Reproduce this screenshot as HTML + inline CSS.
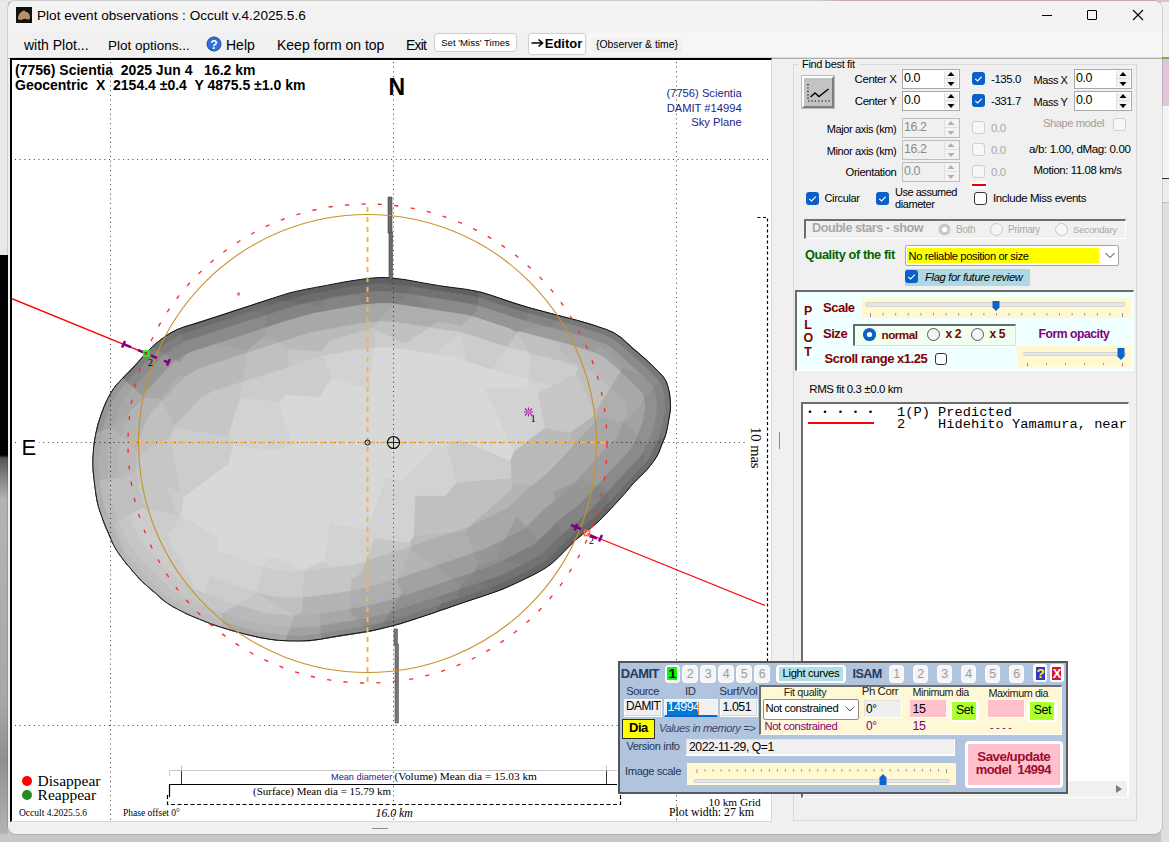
<!DOCTYPE html>
<html><head><meta charset="utf-8">
<style>
*{margin:0;padding:0;box-sizing:border-box}
html,body{width:1169px;height:842px;overflow:hidden;background:#c9c9c9;font-family:"Liberation Sans",sans-serif;color:#000}
.a{position:absolute;white-space:nowrap}
.s{font-family:"Liberation Serif",serif}
.m{font-family:"Liberation Mono",monospace}
.b{font-weight:bold}
.i{font-style:italic}
</style></head><body>
<!-- outside strips -->
<div class="a" style="left:0;top:0;width:8px;height:842px;background:linear-gradient(#e9e9e9 0,#e9e9e9 255px,#000 255px,#000 455px,#555 458px,#8a8a8a 480px,#b3b3b3 500px,#a8a8a8 700px,#8f8f8f 760px,#b8b8b8 842px)"></div>
<div class="a" style="left:0;top:834px;width:1169px;height:8px;background:#c7c7c7"></div>
<div class="a" style="left:0;top:0;width:1169px;height:2px;background:linear-gradient(90deg,#e6e6e6 0,#e6e6e6 820px,#dcc0d4 840px,#dcc0d4 1169px)"></div>
<div class="a" style="left:1161px;top:0;width:8px;height:842px;background:linear-gradient(#dcc0d4 0,#dcc0d4 2px,#f0f0f0 2px,#f0f0f0 57px,#7cb342 57px,#7cb342 59px,#e0c4d8 59px,#e0c4d8 106px,#f4f4f4 106px,#f4f4f4 178px,#333 178px,#333 179px,#ececec 179px,#ececec 202px,#bdbdbd 202px,#bdbdbd 203px,#dedede 203px,#dedede 842px)"></div>

<!-- window -->
<div class="a" id="win" style="left:8px;top:1px;width:1154px;height:833px;background:#f0f0f0;border-radius:8px;box-shadow:0 0 0 1px rgba(0,0,0,0.12);overflow:hidden">
  <div class="a" style="left:0;top:0;width:1154px;height:30px;background:#f3f3f3"></div>
  <div class="a" style="left:0;top:30px;width:1154px;height:28px;background:#f6f6f6"></div>
  <div class="a" style="left:0;top:30px;width:579px;height:24.5px;background:#f0f0f0"></div>
  <div class="a" style="left:0;top:56px;width:1154px;height:1.5px;background:linear-gradient(#f6f6f6,#9a9a9a)"></div>
</div>

<!-- title -->
<div class="a" style="left:16px;top:7px;width:16px;height:16px;background:#111"></div>
<svg class="a" style="left:16px;top:7px" width="16" height="16"><path d="M2 12 C2 8 4 5 7 4 C8 3 9 4 10 5 C12 5 14 7 14 10 C14 13 12 13 10 12 C8 11 6 13 4 13 Z" fill="#b89068"/></svg>
<div class="a" style="left:37px;top:7px;font-size:13.6px;line-height:17px;color:#000">Plot event observations : Occult v.4.2025.5.6</div>
<div class="a" style="left:1042px;top:15px;width:10px;height:1px;background:#000"></div>
<div class="a" style="left:1087px;top:10px;width:10px;height:10px;border:1px solid #000;border-radius:1px"></div>
<svg class="a" style="left:1132px;top:9px" width="12" height="12"><path d="M1 1 L11 11 M11 1 L1 11" stroke="#000" stroke-width="1.1"/></svg>

<!-- menu -->
<div class="a" style="left:24px;top:37px;font-size:14px;line-height:17px">with Plot...</div>
<div class="a" style="left:108px;top:37px;font-size:13.5px;line-height:17px">Plot options...</div>
<svg class="a" style="left:206px;top:36px" width="16" height="16"><circle cx="8" cy="8" r="7" fill="#2f6fd8" stroke="#1a4aa0" stroke-width="1"/><text x="8" y="12.5" font-family="Liberation Sans" font-weight="bold" font-size="12" fill="#fff" text-anchor="middle">?</text></svg>
<div class="a" style="left:226px;top:37px;font-size:14px;line-height:17px">Help</div>
<div class="a" style="left:277px;top:37px;font-size:14px;line-height:17px">Keep form on top</div>
<div class="a" style="left:406px;top:37px;font-size:14px;letter-spacing:-0.8px;line-height:17px">Exit</div>
<div class="a" style="left:434px;top:32.5px;width:83px;height:19.5px;background:#fff;border:1px solid #d0d0d0;border-radius:4px;font-size:9.6px;line-height:18px;text-align:center">Set 'Miss' Times</div>
<div class="a b" style="left:527.5px;top:32.5px;width:58px;height:22px;background:#fff;border:1px solid #d0d0d0;border-radius:4px;font-size:13px;line-height:20px;text-align:center"><svg width="14" height="10" style="vertical-align:0px"><path d="M0.5 5 H11 M7.5 1.5 L11.5 5 L7.5 8.5" fill="none" stroke="#000" stroke-width="1.6"/></svg>Editor</div>
<div class="a" style="left:592px;top:38.5px;width:90px;height:13px;background:#f0f0f0"></div><div class="a" style="left:596px;top:38px;font-size:10.4px;line-height:14px">{Observer &amp; time}</div>

<!-- plot area -->
<div class="a" style="left:10px;top:58px;width:762px;height:764px;background:#fff;border-top:2px solid #000;border-left:2px solid #000;border-right:1px solid #d8d8d8;border-bottom:1px solid #d8d8d8"></div>
<svg class="a" style="left:0;top:0" width="1169" height="842" viewBox="0 0 1169 842">
<defs><clipPath id="pc"><rect x="12" y="60" width="759" height="760"/></clipPath></defs>
<g clip-path="url(#pc)">
<polygon points="93.6,448.3 94.4,441.7 95.5,435.3 96.8,429.1 98.4,423.2 100.2,417.5 102.1,412.0 104.1,406.8 106.2,401.8 108.5,397.0 111.0,392.7 113.7,388.5 117.1,384.2 121.6,379.4 126.8,374.4 132.0,369.2 137.1,363.4 142.2,357.4 147.0,352.0 151.3,347.7 155.4,343.9 159.9,340.3 165.1,336.5 170.7,332.9 177.0,329.6 183.8,327.0 191.3,324.8 200.0,322.2 210.3,318.8 221.9,315.1 234.2,311.0 248.2,306.4 262.9,301.5 275.3,297.4 283.3,294.8 289.0,293.1 295.8,291.4 305.2,289.4 315.7,287.4 326.6,285.4 337.9,283.2 349.6,281.1 360.8,279.4 370.5,278.2 379.7,277.5 391.0,277.8 406.1,279.8 423.1,282.9 439.2,285.7 453.0,287.6 465.7,289.2 478.5,291.6 491.6,295.4 504.8,300.0 517.9,304.4 531.4,308.3 544.8,311.9 557.2,315.2 567.8,318.0 577.4,320.4 586.7,323.1 596.4,326.1 605.9,329.3 614.3,333.0 621.0,337.6 626.7,342.8 632.0,347.8 637.2,352.1 642.0,356.2 647.0,360.6 652.7,365.9 658.4,371.5 663.0,376.6 665.7,380.6 667.2,384.2 668.4,388.4 669.5,394.0 670.2,400.1 670.5,405.5 670.4,409.2 670.0,412.3 669.4,416.0 668.5,421.4 667.4,427.5 666.2,433.0 664.9,437.0 663.5,440.4 662.0,444.0 660.4,448.1 658.8,452.5 656.6,456.8 653.8,461.1 650.6,465.3 647.0,469.6 643.0,473.8 638.6,478.0 634.2,482.4 630.3,486.9 626.5,491.6 621.4,497.4 614.3,505.1 606.1,513.9 598.0,522.0 590.3,528.5 582.7,534.3 575.7,540.0 569.6,545.9 564.1,551.6 558.8,556.9 554.3,561.2 549.9,565.0 543.7,569.2 533.8,574.6 522.0,580.4 511.7,585.2 504.8,588.3 499.4,590.4 492.9,592.7 484.1,595.7 474.2,599.0 464.7,602.1 456.2,605.0 448.1,607.9 440.2,610.6 432.6,613.2 425.2,615.6 417.6,618.1 409.6,620.7 401.3,623.3 393.2,625.6 385.6,627.6 378.1,629.3 370.0,631.0 360.8,632.5 351.0,634.0 341.0,635.5 330.8,637.3 320.4,639.2 310.0,640.5 299.6,641.0 289.3,640.9 279.5,640.4 270.5,639.4 262.1,637.9 253.6,636.1 244.8,634.0 236.0,631.6 227.8,629.2 220.6,627.0 213.9,624.8 207.1,622.3 199.6,619.3 191.8,616.1 184.7,612.8 178.4,609.7 172.7,606.5 167.5,603.3 163.1,600.0 159.4,596.6 155.4,593.0 151.0,589.3 146.3,585.3 141.7,581.0 137.0,576.1 132.4,570.8 127.9,565.4 123.5,560.0 119.4,554.4 115.8,549.1 113.1,544.2 111.1,539.4 109.0,534.4 106.6,528.9 104.2,523.0 102.0,517.2 100.1,512.0 98.4,506.7 96.9,500.0 95.4,490.5 94.0,479.6 93.1,469.7 92.8,461.8 93.1,454.9" fill="rgb(96,96,96)"/>
<path d="M666.4 382.1 663.4 376.9 645.9 359.4 620.9 337.4 612.4 332.1 588.6 323.6 530.1 308.1 479.9 291.9 478.4 297.9 403.9 285.4 378.9 283.4 339.9 288.6 300.1 296.4 284.6 300.9 270.6 298.9 182.9 327.4 170.1 333.1 153.1 345.9 116.6 384.6 110.9 392.9 103.6 407.9 98.1 423.6 94.4 441.1 92.9 465.6 96.9 500.6 104.1 523.4 112.4 542.6 124.1 560.9 140.4 579.9 163.4 600.4 186.6 613.9 212.9 624.6 236.6 631.9 259.1 637.4 278.6 640.4 310.9 640.6 370.6 631.1 400.9 623.6 503.1 589.1 535.4 573.9 551.1 564.1 576.1 539.6 602.1 518.1 633.4 483.1 647.6 469.1 656.9 456.6 665.4 435.9 670.1 412.9 669.6 393.6Z" fill="rgb(102,102,102)" fill-rule="evenodd" stroke="rgb(102,102,102)" stroke-width="0.6"/>
<path d="M666.4 382.1 663.4 376.9 645.9 359.4 620.9 337.4 612.4 332.1 588.6 323.6 530.1 308.1 479.9 291.9 478.4 297.9 403.9 285.4 378.9 283.4 353.4 286.4 307.1 294.9 267.9 306.4 267.9 299.9 182.9 327.4 170.1 333.1 153.1 345.9 116.6 384.6 110.9 392.9 103.6 407.9 98.1 423.6 94.4 441.1 92.9 465.6 96.9 500.6 104.1 523.4 112.4 542.6 124.1 560.9 140.4 579.9 163.4 600.4 186.6 613.9 212.9 624.6 236.6 631.9 259.1 637.4 278.6 640.4 310.9 640.6 370.6 631.1 400.9 623.6 494.6 592.1 488.6 587.6 502.6 582.9 542.4 562.9 552.6 554.6 572.1 535.1 593.4 518.4 608.9 502.1 609.6 510.1 633.4 483.1 647.6 469.1 659.1 452.1 666.1 433.4 670.4 410.6 669.6 393.6Z" fill="rgb(108,108,108)" fill-rule="evenodd" stroke="rgb(108,108,108)" stroke-width="0.6"/>
<path d="M666.4 382.1 663.4 376.9 649.9 363.1 614.9 333.4 588.6 323.6 529.9 307.9 527.6 313.6 475.4 296.9 412.6 286.9 406.6 293.9 390.6 291.6 371.1 291.9 328.9 297.9 326.9 299.4 302.6 304.1 283.1 301.1 181.9 334.4 179.9 328.9 170.1 333.1 155.9 343.4 119.4 381.6 112.9 389.6 105.6 402.9 98.1 423.6 94.4 441.1 92.9 465.6 96.9 500.6 104.1 523.4 112.4 542.6 124.1 560.9 140.4 579.9 163.4 600.4 186.6 613.9 212.9 624.6 236.6 631.9 259.1 637.4 278.6 640.4 310.9 640.6 370.6 631.1 400.9 623.6 435.1 612.4 440.4 604.1 502.6 582.9 532.4 568.6 547.1 559.6 572.1 535.1 597.6 514.1 645.6 462.1 651.6 453.6 657.1 440.1 664.9 437.4 670.6 407.1 669.6 393.6Z" fill="rgb(114,114,114)" fill-rule="evenodd" stroke="rgb(114,114,114)" stroke-width="0.6"/>
<path d="M666.4 382.1 663.4 376.9 645.9 359.4 620.9 337.4 612.4 332.1 595.1 325.6 562.9 316.6 556.9 321.4 515.9 310.1 479.1 297.9 477.4 305.9 390.6 291.6 374.4 291.6 328.9 297.9 326.9 299.4 295.9 305.6 266.4 315.4 265.9 311.6 250.4 311.9 180.1 334.9 171.6 339.4 157.4 350.4 151.6 347.4 116.6 384.6 110.9 392.9 103.6 407.9 98.1 423.6 94.4 441.1 92.9 465.6 96.9 500.6 104.1 523.4 112.4 542.6 124.1 560.9 140.4 579.9 163.4 600.4 186.6 613.9 212.9 624.6 236.6 631.9 259.1 637.4 278.6 640.4 310.9 640.6 370.6 631.1 400.9 623.6 435.1 612.4 440.4 604.1 488.1 587.9 480.6 581.9 498.9 575.6 529.1 561.1 542.1 553.4 567.1 528.9 588.4 512.1 608.1 491.1 609.1 501.9 646.6 460.9 651.6 453.6 657.1 440.1 664.9 437.4 670.6 407.1 669.6 393.6Z" fill="rgb(120,120,120)" fill-rule="evenodd" stroke="rgb(120,120,120)" stroke-width="0.6"/>
<path d="M660.9 384.6 656.1 377.9 641.9 363.9 617.1 342.1 609.9 337.6 586.1 329.1 527.6 313.6 479.1 297.9 477.4 305.9 403.9 293.4 378.9 291.4 353.4 294.4 307.4 302.9 282.9 309.6 183.6 342.4 180.9 334.6 171.6 339.4 157.4 350.4 151.6 347.4 113.4 388.9 105.6 402.9 100.4 416.6 94.4 441.1 92.9 458.4 93.1 470.9 96.9 500.6 104.1 523.4 112.4 542.6 124.1 560.9 140.4 579.9 163.4 600.4 186.6 613.9 212.9 624.6 236.6 631.9 259.1 637.4 278.6 640.4 310.9 640.6 378.6 629.4 383.6 621.9 398.4 618.1 459.6 597.6 457.6 592.9 459.6 588.9 498.9 575.6 529.1 561.1 542.1 553.4 567.1 528.9 591.4 509.1 622.6 474.1 636.9 460.1 644.4 449.9 644.9 462.9 648.9 457.9 659.4 434.9 664.4 411.6 663.9 395.1Z" fill="rgb(126,126,126)" fill-rule="evenodd" stroke="rgb(126,126,126)" stroke-width="0.6"/>
<path d="M660.9 384.6 658.4 380.4 645.9 367.6 611.9 338.6 576.1 326.1 528.4 313.6 525.6 321.4 472.6 304.4 406.9 293.9 395.4 304.4 378.9 303.4 363.1 304.9 357.6 294.9 327.4 299.1 320.6 307.1 301.9 304.1 189.1 340.1 176.4 345.9 164.6 354.4 157.1 350.4 126.9 382.4 122.4 378.6 113.4 388.9 108.4 397.4 96.9 428.6 92.9 458.4 93.1 470.9 96.9 500.6 104.1 523.4 112.4 542.6 124.1 560.9 140.4 579.9 163.4 600.4 186.6 613.9 212.9 624.6 236.6 631.9 259.1 637.4 278.6 640.4 310.9 640.6 367.6 631.6 362.9 626.6 398.4 618.1 439.4 604.6 441.9 600.4 432.9 598.1 498.9 575.6 523.1 564.1 501.1 560.9 534.1 544.1 558.1 520.6 560.6 535.1 588.4 512.1 636.9 460.1 644.1 450.4 646.9 443.9 657.4 439.9 661.9 425.6 664.9 405.9 663.9 395.1Z" fill="rgb(132,132,132)" fill-rule="evenodd" stroke="rgb(132,132,132)" stroke-width="0.6"/>
<path d="M659.4 381.9 645.9 367.6 617.1 342.1 603.6 334.9 558.6 321.6 551.9 327.4 548.6 327.4 464.9 302.9 418.9 296.1 428.9 309.9 390.6 303.6 371.1 303.9 308.9 314.6 266.6 327.9 265.9 315.4 185.1 341.6 176.4 345.9 164.6 354.4 157.1 350.4 126.9 382.4 122.4 378.6 116.6 384.6 110.9 392.9 103.6 407.9 98.1 423.6 94.4 441.1 92.9 465.6 96.9 500.6 104.1 523.4 112.4 542.6 124.1 560.9 140.4 579.9 163.4 600.4 186.6 613.9 212.9 624.6 236.6 631.9 259.1 637.4 278.6 640.4 310.9 640.6 367.6 631.6 363.1 626.4 383.1 622.1 389.6 612.1 458.6 589.4 460.6 585.9 471.4 576.4 474.1 571.4 493.1 564.9 533.4 544.6 558.1 520.6 579.4 503.9 597.9 484.4 608.1 491.1 622.6 474.1 636.9 460.1 644.4 449.9 644.4 444.9 647.1 443.6 652.6 429.6 656.4 411.6 656.1 397.1 653.4 388.1Z" fill="rgb(138,138,138)" fill-rule="evenodd" stroke="rgb(138,138,138)" stroke-width="0.6"/>
<path d="M653.6 388.4 649.9 382.9 636.9 370.1 612.4 348.6 606.1 344.9 582.4 336.4 523.9 320.9 477.9 305.9 476.9 311.4 471.4 316.4 403.9 305.4 384.1 303.4 361.4 305.1 312.4 313.9 186.9 353.1 176.1 360.9 164.6 354.4 133.4 387.6 122.4 378.6 113.4 388.9 108.4 397.4 96.9 428.6 92.9 458.4 93.1 470.9 96.9 500.6 104.1 523.4 112.4 542.6 119.6 554.9 142.6 582.1 163.4 600.4 172.9 606.9 212.9 624.6 253.1 636.1 287.1 640.9 307.4 640.9 321.1 639.1 320.9 633.1 382.4 622.4 390.1 611.9 458.6 589.4 460.6 585.9 451.9 578.9 493.1 564.9 534.1 544.1 558.1 520.6 579.4 503.9 631.1 448.1 637.1 435.6 644.6 444.6 647.1 443.6 653.4 427.1 656.4 411.6 656.1 397.1Z" fill="rgb(144,144,144)" fill-rule="evenodd" stroke="rgb(144,144,144)" stroke-width="0.6"/>
<path d="M653.4 387.9 636.9 370.1 612.4 348.6 606.1 344.9 582.4 336.4 523.9 320.9 477.9 305.9 476.9 311.4 471.4 316.4 403.9 305.4 384.1 303.4 361.4 305.1 312.4 313.9 287.9 320.6 194.9 350.9 182.1 356.6 176.1 360.9 164.6 354.4 133.4 387.6 122.4 378.6 113.4 388.9 108.4 397.4 96.9 428.6 92.9 458.4 93.1 470.9 96.9 500.6 104.1 523.4 112.4 542.6 119.6 554.9 142.6 582.1 163.4 600.4 172.9 606.9 212.9 624.6 253.1 636.1 287.1 640.9 307.4 640.9 321.1 639.1 320.9 633.1 362.6 626.1 356.9 619.4 389.1 612.4 399.6 596.4 473.9 571.6 477.6 564.9 495.4 560.4 504.9 539.4 526.1 526.9 538.6 540.1 558.1 520.6 579.4 503.9 631.1 448.1 635.6 440.1 642.4 422.1 644.6 409.4 644.1 398.9Z" fill="rgb(150,150,150)" fill-rule="evenodd" stroke="rgb(150,150,150)" stroke-width="0.6"/>
<path d="M643.4 376.4 608.6 346.1 588.9 338.4 549.4 327.4 523.9 328.1 518.9 331.9 467.6 315.4 390.6 303.6 363.1 304.9 308.9 314.6 189.6 352.9 185.1 355.4 180.1 363.1 176.1 360.9 171.1 364.9 142.4 395.9 126.9 382.6 118.6 391.9 113.6 400.4 105.9 419.1 102.6 430.9 95.9 433.6 93.6 447.4 92.9 465.6 96.9 500.6 104.1 523.4 112.4 542.6 119.6 554.9 142.6 582.1 163.4 600.4 172.9 606.9 212.9 624.6 243.6 633.9 262.9 638.1 284.6 640.6 286.9 634.9 300.9 635.4 319.9 633.4 320.1 625.1 367.9 617.6 389.1 612.4 399.6 596.4 473.9 571.6 477.4 565.1 473.4 552.4 485.1 548.4 523.4 529.4 545.1 507.9 566.4 491.1 575.4 481.9 582.6 479.1 597.9 484.4 631.1 448.1 635.6 440.1 643.1 418.9 644.9 405.6 642.9 394.1 619.9 371.6 622.9 367.1Z" fill="rgb(156,156,156)" fill-rule="evenodd" stroke="rgb(156,156,156)" stroke-width="0.6"/>
<path d="M642.9 394.1 619.9 371.6 622.6 367.4 600.6 346.9 592.9 352.6 567.4 344.4 512.1 329.9 467.6 315.4 390.6 303.6 363.1 304.9 313.6 313.6 287.9 320.6 189.6 352.9 185.1 355.4 180.1 363.1 176.1 360.9 171.1 364.9 142.4 395.9 126.9 382.6 118.6 391.9 113.6 400.4 105.9 419.1 102.6 430.9 95.9 433.6 93.6 447.4 92.9 465.6 96.9 500.6 104.1 523.4 112.4 542.6 119.6 554.9 140.4 579.9 164.4 601.1 186.6 613.9 221.1 627.4 253.1 636.1 284.6 640.6 286.9 634.9 300.9 635.4 319.9 633.4 320.1 625.1 356.4 619.4 349.4 611.9 349.6 608.4 367.4 605.6 399.4 596.6 401.6 592.9 407.4 594.1 451.4 579.1 434.4 565.6 485.1 548.4 504.9 539.1 516.4 515.4 526.4 526.6 545.1 507.9 554.4 500.6 553.4 490.9 575.1 482.1 601.6 452.1 616.9 436.6 623.4 421.1 625.9 421.1 637.1 435.4 641.6 424.6 644.9 405.6Z" fill="rgb(162,162,162)" fill-rule="evenodd" stroke="rgb(162,162,162)" stroke-width="0.6"/>
<path d="M642.9 394.1 627.9 378.4 600.4 355.6 567.4 344.4 519.6 331.9 516.9 333.1 508.6 328.6 467.6 315.4 384.1 303.4 361.4 305.1 313.6 313.6 266.1 327.9 266.1 335.6 247.9 350.4 215.9 344.4 189.6 352.9 185.1 355.4 180.1 363.1 176.1 360.9 171.1 364.9 142.4 395.9 132.9 387.9 125.6 395.9 121.1 403.6 111.6 428.1 95.9 433.6 93.6 447.4 92.9 465.6 96.9 500.6 104.1 523.4 112.4 542.6 119.6 554.9 140.4 579.9 164.4 601.1 186.6 613.9 221.1 627.4 253.1 636.1 284.6 640.6 290.1 627.1 309.6 626.9 356.4 619.4 349.4 611.9 349.6 608.4 370.6 604.9 399.4 596.6 401.4 592.6 396.9 581.1 398.4 577.9 483.1 549.1 504.9 539.1 516.4 515.4 526.4 526.6 545.1 507.9 554.4 500.6 553.4 490.9 575.1 482.1 601.6 452.1 615.9 438.1 623.1 421.4 626.1 420.4 643.9 399.4Z" fill="rgb(168,168,168)" fill-rule="evenodd" stroke="rgb(168,168,168)" stroke-width="0.6"/>
<path d="M619.9 371.6 602.9 356.9 577.4 347.4 519.6 331.9 516.9 333.1 508.6 328.6 467.6 315.4 396.4 304.4 376.9 321.6 358.1 323.6 316.6 331.1 278.4 343.1 265.9 335.9 248.6 349.6 247.4 353.4 198.9 368.9 184.6 377.4 178.6 375.1 160.9 399.4 144.9 398.1 112.6 427.9 102.4 431.1 98.6 459.6 100.1 479.9 94.1 480.4 98.4 506.9 112.4 542.6 119.6 554.9 140.4 579.9 167.1 603.1 199.4 619.4 241.9 633.4 222.6 623.4 222.6 621.4 255.6 630.6 286.9 634.9 290.1 627.1 306.1 627.1 319.9 625.4 318.9 614.4 317.6 613.6 367.4 605.6 399.4 596.6 401.4 592.6 396.9 581.1 398.4 577.9 473.1 552.6 466.1 531.4 468.1 526.9 508.1 507.6 526.1 489.6 552.1 468.1 583.4 433.1 594.4 422.6 597.6 414.9 616.4 421.4 623.4 421.1 626.4 411.6 626.6 402.9 610.4 387.1Z" fill="rgb(174,174,174)" fill-rule="evenodd" stroke="rgb(174,174,174)" stroke-width="0.6"/>
<path d="M619.9 371.6 604.4 357.9 594.1 352.9 567.4 344.4 519.6 331.9 516.9 333.1 508.6 328.6 472.1 316.6 460.6 326.1 438.1 321.6 428.6 327.9 392.6 321.9 378.9 321.4 353.4 324.4 309.6 332.9 197.6 369.4 184.1 377.6 162.1 401.9 160.9 399.4 144.9 398.1 131.1 410.9 121.4 436.4 111.4 428.4 106.9 454.6 107.9 479.4 100.1 480.1 103.1 501.4 109.4 519.6 100.1 512.4 112.4 542.6 124.1 560.9 142.6 582.1 169.4 604.6 186.6 613.9 206.9 622.4 241.9 633.4 222.6 623.4 222.6 621.4 255.6 630.6 286.9 634.9 293.6 617.4 295.6 615.4 309.6 614.9 348.9 608.6 350.9 590.1 380.9 583.6 433.9 565.9 411.1 548.9 410.6 546.1 450.9 532.4 466.1 531.1 466.6 528.4 469.1 526.1 508.1 507.6 526.1 489.6 547.4 472.9 594.4 422.6 598.6 412.1 596.4 409.9Z" fill="rgb(180,180,180)" fill-rule="evenodd" stroke="rgb(180,180,180)" stroke-width="0.6"/>
<path d="M619.9 371.6 604.4 357.9 594.1 352.9 567.4 344.4 519.6 331.9 516.9 333.1 508.6 328.6 472.1 316.6 460.6 326.1 438.1 321.6 428.6 327.9 392.6 321.9 378.9 321.4 373.9 324.4 372.4 321.9 309.6 332.9 202.9 367.4 186.1 375.9 150.6 413.4 141.4 433.9 137.1 450.1 121.4 436.9 118.6 459.6 119.9 478.4 100.1 480.1 103.9 504.4 109.6 520.9 124.9 553.4 120.6 556.1 142.6 582.1 169.4 604.6 191.6 616.1 220.4 627.1 222.1 623.4 220.6 614.1 222.6 612.9 259.4 623.4 289.9 627.1 294.1 616.6 292.4 615.4 296.1 615.1 302.1 611.4 302.6 597.1 360.4 588.9 397.9 578.1 410.4 549.6 410.6 546.1 468.9 526.4 508.9 491.9 513.1 482.4 530.6 486.1 552.1 468.1 572.6 446.1 569.9 432.6 595.1 414.1 594.9 412.1Z" fill="rgb(186,186,186)" fill-rule="evenodd" stroke="rgb(186,186,186)" stroke-width="0.6"/>
<path d="M610.1 387.1 593.9 372.9 578.4 366.9 578.4 364.1 562.4 354.1 557.6 342.1 519.6 331.9 517.4 333.1 507.6 347.4 462.4 332.6 403.9 323.4 378.9 321.4 373.9 324.4 373.1 328.4 329.4 341.6 320.9 351.9 289.1 349.6 277.9 343.1 247.6 353.1 243.1 382.1 214.4 391.1 202.6 396.4 174.4 426.9 162.1 402.1 151.1 412.6 145.6 422.9 138.1 443.6 136.9 466.4 134.9 471.1 122.1 478.6 108.1 479.6 111.1 500.6 119.1 521.9 114.9 524.9 123.9 550.4 146.6 577.6 167.4 595.9 189.1 608.4 221.4 621.1 220.6 614.1 236.6 604.6 268.4 613.1 296.1 615.1 302.1 611.4 302.6 597.1 350.4 590.4 351.1 579.4 361.1 572.9 365.9 560.6 410.1 546.4 409.4 542.1 413.6 535.6 451.4 532.4 468.9 526.4 510.6 490.1 512.9 482.1 510.6 476.6 509.9 460.1 514.1 451.1 544.6 427.6 570.1 432.4 595.1 414.1 591.6 405.9 596.6 409.6Z" fill="rgb(192,192,192)" fill-rule="evenodd" stroke="rgb(192,192,192)" stroke-width="0.6"/>
<path d="M594.9 412.9 576.1 373.6 578.1 366.6 529.4 353.1 517.4 333.6 507.6 347.4 462.4 332.6 429.1 327.9 405.6 343.6 377.1 331.9 373.4 328.1 329.4 341.6 320.9 351.9 289.4 349.6 288.1 367.4 214.4 391.1 202.6 396.4 174.1 426.9 170.1 437.1 141.9 454.1 136.9 466.1 139.1 489.4 146.6 508.6 141.9 508.1 119.1 522.1 128.4 542.6 141.4 559.9 154.1 573.6 172.1 589.4 180.9 594.9 182.1 598.4 187.1 598.1 222.1 612.9 236.6 604.6 265.6 612.6 292.1 615.1 255.9 593.4 256.6 591.9 273.1 595.9 300.9 597.4 350.4 590.4 351.1 579.4 361.1 572.9 365.9 560.6 410.1 546.4 409.4 542.1 413.4 535.9 415.1 495.1 445.4 495.4 457.1 481.9 510.9 477.9 509.9 460.1 513.6 451.6 540.9 430.4 545.9 427.6 570.1 432.4 594.6 414.6Z" fill="rgb(198,198,198)" fill-rule="evenodd" stroke="rgb(198,198,198)" stroke-width="0.6"/>
<path d="M578.1 366.6 539.1 355.6 531.1 356.1 528.9 352.9 498.4 344.6 461.1 332.4 429.1 327.9 405.6 343.6 375.9 331.1 373.9 347.9 321.1 356.6 243.1 382.1 240.6 397.6 228.4 436.9 174.4 427.9 170.4 436.9 181.1 493.6 166.1 486.6 178.4 515.1 141.9 508.1 129.6 515.9 139.1 536.9 159.4 561.9 180.6 580.6 198.6 590.4 236.1 604.6 255.6 593.6 256.6 591.9 273.1 595.9 302.4 597.1 303.4 571.1 353.9 563.9 365.6 560.9 374.1 537.9 409.4 542.4 413.4 535.9 415.1 495.1 445.4 495.4 457.1 481.9 510.9 477.9 509.9 460.1 513.6 451.6 544.6 427.6 537.4 393.1 576.1 373.6Z" fill="rgb(204,204,204)" fill-rule="evenodd" stroke="rgb(204,204,204)" stroke-width="0.6"/>
<path d="M551.6 385.9 528.4 379.4 530.9 355.6 528.1 352.6 507.6 347.4 491.9 369.9 466.1 361.4 460.6 334.9 432.9 354.6 403.9 349.4 378.9 347.4 358.1 349.6 323.1 356.1 331.6 378.6 319.4 397.4 286.1 395.6 278.9 401.9 240.1 398.1 228.6 436.1 233.1 445.9 229.1 463.4 183.6 497.6 181.9 515.9 178.4 515.4 180.1 518.9 168.6 534.1 172.1 548.9 178.6 554.6 195.6 588.9 204.9 592.9 209.9 575.1 232.9 584.6 256.4 591.6 263.9 566.9 275.4 570.1 300.9 571.4 323.6 560.4 333.4 566.9 355.4 563.6 365.6 560.9 374.1 537.9 409.4 542.4 413.4 535.9 414.9 495.4 445.4 495.4 456.4 482.1 446.6 445.9 458.1 439.1 509.9 460.1 514.1 451.1 544.6 427.6 537.4 393.1Z" fill="rgb(210,210,210)" fill-rule="evenodd" stroke="rgb(210,210,210)" stroke-width="0.6"/>
<path d="M528.4 379.6 486.9 368.4 456.1 357.9 392.6 347.9 374.4 347.6 369.9 389.4 331.4 378.9 319.4 397.4 286.1 395.6 279.1 402.4 293.6 445.4 272.6 450.6 233.1 446.4 228.9 463.9 183.6 497.6 181.9 516.1 219.9 538.1 217.1 549.6 263.1 566.6 266.4 559.1 274.9 557.1 303.6 569.6 323.9 560.4 329.4 525.1 330.6 523.4 366.9 528.9 386.4 477.1 401.6 480.6 435.9 445.4 446.6 445.9 458.1 439.1 509.9 460.1 513.6 451.1 484.6 389.1 526.9 386.6Z" fill="rgb(216,216,216)" fill-rule="evenodd" stroke="rgb(216,216,216)" stroke-width="0.6"/>
<polygon points="93.6,448.3 94.4,441.7 95.5,435.3 96.8,429.1 98.4,423.2 100.2,417.5 102.1,412.0 104.1,406.8 106.2,401.8 108.5,397.0 111.0,392.7 113.7,388.5 117.1,384.2 121.6,379.4 126.8,374.4 132.0,369.2 137.1,363.4 142.2,357.4 147.0,352.0 151.3,347.7 155.4,343.9 159.9,340.3 165.1,336.5 170.7,332.9 177.0,329.6 183.8,327.0 191.3,324.8 200.0,322.2 210.3,318.8 221.9,315.1 234.2,311.0 248.2,306.4 262.9,301.5 275.3,297.4 283.3,294.8 289.0,293.1 295.8,291.4 305.2,289.4 315.7,287.4 326.6,285.4 337.9,283.2 349.6,281.1 360.8,279.4 370.5,278.2 379.7,277.5 391.0,277.8 406.1,279.8 423.1,282.9 439.2,285.7 453.0,287.6 465.7,289.2 478.5,291.6 491.6,295.4 504.8,300.0 517.9,304.4 531.4,308.3 544.8,311.9 557.2,315.2 567.8,318.0 577.4,320.4 586.7,323.1 596.4,326.1 605.9,329.3 614.3,333.0 621.0,337.6 626.7,342.8 632.0,347.8 637.2,352.1 642.0,356.2 647.0,360.6 652.7,365.9 658.4,371.5 663.0,376.6 665.7,380.6 667.2,384.2 668.4,388.4 669.5,394.0 670.2,400.1 670.5,405.5 670.4,409.2 670.0,412.3 669.4,416.0 668.5,421.4 667.4,427.5 666.2,433.0 664.9,437.0 663.5,440.4 662.0,444.0 660.4,448.1 658.8,452.5 656.6,456.8 653.8,461.1 650.6,465.3 647.0,469.6 643.0,473.8 638.6,478.0 634.2,482.4 630.3,486.9 626.5,491.6 621.4,497.4 614.3,505.1 606.1,513.9 598.0,522.0 590.3,528.5 582.7,534.3 575.7,540.0 569.6,545.9 564.1,551.6 558.8,556.9 554.3,561.2 549.9,565.0 543.7,569.2 533.8,574.6 522.0,580.4 511.7,585.2 504.8,588.3 499.4,590.4 492.9,592.7 484.1,595.7 474.2,599.0 464.7,602.1 456.2,605.0 448.1,607.9 440.2,610.6 432.6,613.2 425.2,615.6 417.6,618.1 409.6,620.7 401.3,623.3 393.2,625.6 385.6,627.6 378.1,629.3 370.0,631.0 360.8,632.5 351.0,634.0 341.0,635.5 330.8,637.3 320.4,639.2 310.0,640.5 299.6,641.0 289.3,640.9 279.5,640.4 270.5,639.4 262.1,637.9 253.6,636.1 244.8,634.0 236.0,631.6 227.8,629.2 220.6,627.0 213.9,624.8 207.1,622.3 199.6,619.3 191.8,616.1 184.7,612.8 178.4,609.7 172.7,606.5 167.5,603.3 163.1,600.0 159.4,596.6 155.4,593.0 151.0,589.3 146.3,585.3 141.7,581.0 137.0,576.1 132.4,570.8 127.9,565.4 123.5,560.0 119.4,554.4 115.8,549.1 113.1,544.2 111.1,539.4 109.0,534.4 106.6,528.9 104.2,523.0 102.0,517.2 100.1,512.0 98.4,506.7 96.9,500.0 95.4,490.5 94.0,479.6 93.1,469.7 92.8,461.8 93.1,454.9" fill="none" stroke="#111" stroke-width="1"/>

<!-- grid -->
<g stroke="#000" stroke-opacity="0.75" stroke-width="1" stroke-dasharray="1 3.7">
<line x1="110.5" y1="62" x2="110.5" y2="820"/>
<line x1="393.5" y1="62" x2="393.5" y2="820"/>
<line x1="676.5" y1="62" x2="676.5" y2="820"/>
<line x1="15" y1="159.5" x2="771" y2="159.5"/>
<line x1="15" y1="442.5" x2="745" y2="442.5"/>
<line x1="15" y1="725.5" x2="771" y2="725.5"/>
</g>

<!-- shadow sticks -->
<rect x="388" y="197" width="4" height="36" fill="#6a6a6a" stroke="#444" stroke-width="0.6"/>
<rect x="389" y="232" width="3.5" height="48" fill="#6a6a6a" stroke="#444" stroke-width="0.6"/>
<rect x="394" y="629" width="3.5" height="16" fill="#777" stroke="#555" stroke-width="0.6"/>
<rect x="395" y="644" width="3.5" height="79" fill="#777" stroke="#555" stroke-width="0.6"/>
<!-- circles -->
<circle cx="367.5" cy="443.5" r="239.5" fill="none" stroke="#ff2a2a" stroke-width="1.35" stroke-dasharray="4.2 12.3"/>
<circle cx="367.5" cy="443.5" r="229" fill="none" stroke="#c8922a" stroke-width="1.1"/>
<line x1="367.5" y1="207" x2="367.5" y2="683" stroke="#f5b447" stroke-width="2" stroke-dasharray="5 5"/>
<line x1="130" y1="442.5" x2="607" y2="442.5" stroke="#f5b447" stroke-width="2" stroke-dasharray="5 5"/>
<circle cx="367.5" cy="442.5" r="2.5" fill="none" stroke="#000" stroke-width="1"/>
<circle cx="393.5" cy="442.5" r="6" fill="none" stroke="#000" stroke-width="1.1"/>
<line x1="387.5" y1="442.5" x2="399.5" y2="442.5" stroke="#000" stroke-width="0.8"/>
<line x1="393.5" y1="436.5" x2="393.5" y2="448.5" stroke="#000" stroke-width="0.8"/>
<!-- chord -->
<line x1="12" y1="298.7" x2="147" y2="353.8" stroke="#ff0000" stroke-width="1.3"/>
<line x1="587" y1="533.5" x2="765" y2="605.5" stroke="#ff0000" stroke-width="1.3"/>
<g stroke="#800080" stroke-width="2.5" stroke-linecap="butt">
<line x1="124.5" y1="344.5" x2="131" y2="347.2"/><line x1="122" y1="347.5" x2="125" y2="341"/>
<line x1="138" y1="350" x2="146" y2="353.3"/>
<line x1="151" y1="355.5" x2="157" y2="358"/>
<line x1="164" y1="360.6" x2="168.5" y2="362.6"/><line x1="167" y1="365.5" x2="170" y2="359"/>
<line x1="571" y1="525" x2="581" y2="529"/><line x1="574.5" y1="530.5" x2="577.5" y2="524"/>
<line x1="589" y1="535" x2="597" y2="538.5"/>
<line x1="599" y1="541.5" x2="602" y2="535"/>
</g>
<rect x="143.8" y="351" width="5" height="5" fill="none" stroke="#22ee22" stroke-width="1.8"/><circle cx="146.3" cy="353.5" r="0.9" fill="#f44"/>
<rect x="584.5" y="530.5" width="5" height="5" fill="none" stroke="#ff6a4a" stroke-width="1.6"/>
<text x="148" y="366" font-family="Liberation Serif" font-size="10" fill="#000">2</text>
<text x="589" y="544" font-family="Liberation Serif" font-size="10" fill="#000">2</text>
<circle cx="238.6" cy="294" r="1.7" fill="#ff60b0"/>
<g stroke="#9b2aa0" stroke-width="1.1"><line x1="524" y1="412" x2="533" y2="412"/><line x1="528.5" y1="407.5" x2="528.5" y2="416.5"/><line x1="525" y1="408.5" x2="532" y2="415.5"/><line x1="532" y1="408.5" x2="525" y2="415.5"/></g>
<circle cx="528.5" cy="412" r="2" fill="#f060c0"/>
<text x="530.5" y="421.5" font-family="Liberation Serif" font-size="10.5" fill="#000">1</text>
<!-- scale bar right -->
<path d="M757.5 217.5 H767.5 V662" fill="none" stroke="#000" stroke-width="1.2" stroke-dasharray="3 2.5"/>
<text transform="translate(751,427) rotate(90)" font-family="Liberation Serif" font-size="14.5" fill="#000">10 mas</text>
<!-- scale bars bottom -->
<path d="M169.5 776 V770.5 H617" fill="none" stroke="#c8c8c8" stroke-width="1"/>
<line x1="181.5" y1="765" x2="181.5" y2="771" stroke="#c8c8c8" stroke-width="1"/>
<line x1="181.5" y1="771" x2="181.5" y2="784" stroke="#333" stroke-width="1"/>
<line x1="606.5" y1="765" x2="606.5" y2="771" stroke="#c8c8c8" stroke-width="1"/>
<line x1="606.5" y1="771" x2="606.5" y2="784" stroke="#333" stroke-width="1"/>
<path d="M169.5 797 V784.5 H617" fill="none" stroke="#000" stroke-width="1.2"/>
<path d="M167.5 795 V804.5 H620.5 V785" fill="none" stroke="#000" stroke-width="1.2" stroke-dasharray="4 2.5"/>
</g>
</svg>
<div class="a" style="left:15.0px;top:62.65px;font-size:14px;line-height:14px;font-weight:bold">(7756) Scientia&nbsp; 2025 Jun 4 &nbsp; 16.2 km</div>
<div class="a" style="left:15.0px;top:78.45px;font-size:14px;line-height:14px;font-weight:bold">Geocentric&nbsp; X&nbsp; 2154.4 ±0.4&nbsp; Y 4875.5 ±1.0 km</div>
<div class="a" style="left:388.5px;top:76.23px;font-size:23px;line-height:23px;font-weight:bold">N</div>
<div class="a" style="left:19px;top:436px;width:20px;height:22px;background:#fff"></div>
<div class="a" style="left:21.5px;top:437.38px;font-size:22px;line-height:22px;">E</div>
<div class="a" style="left:341.7px;width:400px;text-align:right;top:88.02px;font-size:11.2px;line-height:11.2px;color:#22228c">(7756) Scientia</div>
<div class="a" style="left:341.7px;width:400px;text-align:right;top:102.52px;font-size:11.2px;line-height:11.2px;color:#22228c">DAMIT #14994</div>
<div class="a" style="left:341.7px;width:400px;text-align:right;top:117.02px;font-size:11.2px;line-height:11.2px;color:#22228c">Sky Plane</div>
<div class="a" style="left:21.5px;top:775.5px;width:10.0px;height:10.0px;border-radius:50%;background:#f00"></div>
<div class="a" style="left:21.5px;top:789.5px;width:10.0px;height:10.0px;border-radius:50%;background:#228b22"></div>
<div class="a" style="left:37.6px;top:772.72px;font-size:15.5px;line-height:15.5px;font-family:'Liberation Serif',serif;">Disappear</div>
<div class="a" style="left:37.6px;top:786.72px;font-size:15.5px;line-height:15.5px;font-family:'Liberation Serif',serif;">Reappear</div>
<div class="a" style="left:19.0px;top:808.64px;font-size:9.5px;line-height:9.5px;font-family:'Liberation Serif',serif;">Occult 4.2025.5.6</div>
<div class="a" style="left:123.0px;top:808.64px;font-size:9.5px;line-height:9.5px;font-family:'Liberation Serif',serif;">Phase offset 0°</div>
<div class="a" style="left:331.0px;top:772.61px;font-size:9.2px;line-height:9.2px;color:#22228c">Mean diameter</div>
<div class="a" style="left:394.5px;top:771.34px;font-size:11.3px;line-height:11.3px;font-family:'Liberation Serif',serif;">(Volume) Mean dia = 15.03 km</div>
<div class="a" style="left:253.0px;top:785.79px;font-size:11px;line-height:11px;font-family:'Liberation Serif',serif;">(Surface) Mean dia = 15.79 km</div>
<div class="a" style="left:375.5px;top:808.12px;font-size:11.8px;line-height:11.8px;font-family:'Liberation Serif',serif;font-style:italic">16.0 km</div>
<div class="a" style="left:708.6px;top:797.04px;font-size:11.3px;line-height:11.3px;font-family:'Liberation Serif',serif;">10 km Grid</div>
<div class="a" style="left:669.0px;top:807.42px;font-size:11.8px;line-height:11.8px;font-family:'Liberation Serif',serif;">Plot width: 27 km</div>


<div class="a" id="grip" style="left:372px;top:827.5px;width:16px;height:1px;background:#8a8a8a"></div>

<!-- right panel -->
<div class="a" style="left:779px;top:432px;width:1px;height:17px;background:#888"></div>
<div class="a" style="left:793px;top:64px;width:344px;height:757px;border:1px solid #d6d6d6"></div>
<div class="a" style="left:793px;top:64px;width:344px;height:757px;border:1px solid #d9d9d9"></div>
<div class="a" style="left:799px;top:60px;width:60px;height:8px;background:#f0f0f0"></div>
<div class="a" style="left:802.0px;top:59.37px;font-size:11.02px;line-height:11.02px;letter-spacing:-0.326px;">Find best fit</div>
<div class="a" style="left:802px;top:76px;width:32px;height:32px;background:#c3c3c3;border-top:2px solid #fff;border-left:2px solid #fff;border-right:2px solid #7e7e7e;border-bottom:2px solid #7e7e7e;box-shadow:0 0 0 1px #bdbdbd"></div>
<svg class="a" style="left:802px;top:76px" width="32" height="32"><path d="M6 8 V25 H29" fill="none" stroke="#000" stroke-width="1.2" stroke-dasharray="1.2 2.2"/><path d="M8.5 21 L13 17 L17 20.5 L26.5 13" fill="none" stroke="#000" stroke-width="1.4"/></svg>
<div class="a" style="left:496.4px;width:400px;text-align:right;top:73.81px;font-size:11.45px;line-height:11.45px;letter-spacing:-0.419px;">Center X</div>
<div class="a" style="left:496.4px;width:400px;text-align:right;top:95.81px;font-size:11.45px;line-height:11.45px;letter-spacing:-0.419px;">Center Y</div>
<div class="a" style="left:902px;top:69px;width:58px;height:20px;background:#fff;border:1px solid #a8a8a8"></div>
<div class="a" style="left:904.0px;top:71.99px;font-size:12.42px;line-height:12.42px;letter-spacing:-0.426px;color:#000">0.0</div>
<div class="a" style="left:944px;top:71px;width:14px;height:8px;background:#f3f3f3;border-left:1px solid #e0e0e0;border-bottom:1px solid #e0e0e0"></div>
<div class="a" style="left:944px;top:79px;width:14px;height:8px;background:#f3f3f3;border-left:1px solid #e0e0e0"></div>
<svg class="a" style="left:944px;top:69px" width="16" height="20"><path d="M3.5 7.0 L7.0 3.0 L10.5 7.0 Z M3.5 13.0 L7.0 17.0 L10.5 13.0 Z" fill="#000"/></svg>
<div class="a" style="left:902px;top:91px;width:58px;height:20px;background:#fff;border:1px solid #a8a8a8"></div>
<div class="a" style="left:904.0px;top:93.99px;font-size:12.42px;line-height:12.42px;letter-spacing:-0.426px;color:#000">0.0</div>
<div class="a" style="left:944px;top:93px;width:14px;height:8px;background:#f3f3f3;border-left:1px solid #e0e0e0;border-bottom:1px solid #e0e0e0"></div>
<div class="a" style="left:944px;top:101px;width:14px;height:8px;background:#f3f3f3;border-left:1px solid #e0e0e0"></div>
<svg class="a" style="left:944px;top:91px" width="16" height="20"><path d="M3.5 7.0 L7.0 3.0 L10.5 7.0 Z M3.5 13.0 L7.0 17.0 L10.5 13.0 Z" fill="#000"/></svg>
<div class="a" style="left:496.4px;width:400px;text-align:right;top:123.67px;font-size:11.02px;line-height:11.02px;letter-spacing:-0.374px;">Major axis (km)</div>
<div class="a" style="left:496.4px;width:400px;text-align:right;top:146.17px;font-size:11.02px;line-height:11.02px;letter-spacing:-0.374px;">Minor axis (km)</div>
<div class="a" style="left:496.4px;width:400px;text-align:right;top:166.99px;font-size:11.23px;line-height:11.23px;letter-spacing:-0.369px;">Orientation</div>
<div class="a" style="left:902px;top:118px;width:58px;height:20px;background:#f0f0f0;border:1px solid #bdbdbd"></div>
<div class="a" style="left:904.0px;top:120.99px;font-size:12.42px;line-height:12.42px;letter-spacing:-0.448px;color:#8a8a8a">16.2</div>
<div class="a" style="left:944px;top:120px;width:14px;height:8px;background:#f3f3f3;border-left:1px solid #e0e0e0;border-bottom:1px solid #e0e0e0"></div>
<div class="a" style="left:944px;top:128px;width:14px;height:8px;background:#f3f3f3;border-left:1px solid #e0e0e0"></div>
<svg class="a" style="left:944px;top:118px" width="16" height="20"><path d="M3.5 7.0 L7.0 3.0 L10.5 7.0 Z M3.5 13.0 L7.0 17.0 L10.5 13.0 Z" fill="#b0b0b0"/></svg>
<div class="a" style="left:902px;top:140px;width:58px;height:20px;background:#f0f0f0;border:1px solid #bdbdbd"></div>
<div class="a" style="left:904.0px;top:142.99px;font-size:12.42px;line-height:12.42px;letter-spacing:-0.448px;color:#8a8a8a">16.2</div>
<div class="a" style="left:944px;top:142px;width:14px;height:8px;background:#f3f3f3;border-left:1px solid #e0e0e0;border-bottom:1px solid #e0e0e0"></div>
<div class="a" style="left:944px;top:150px;width:14px;height:8px;background:#f3f3f3;border-left:1px solid #e0e0e0"></div>
<svg class="a" style="left:944px;top:140px" width="16" height="20"><path d="M3.5 7.0 L7.0 3.0 L10.5 7.0 Z M3.5 13.0 L7.0 17.0 L10.5 13.0 Z" fill="#b0b0b0"/></svg>
<div class="a" style="left:902px;top:162px;width:58px;height:20px;background:#f0f0f0;border:1px solid #bdbdbd"></div>
<div class="a" style="left:904.0px;top:164.99px;font-size:12.42px;line-height:12.42px;letter-spacing:-0.426px;color:#8a8a8a">0.0</div>
<div class="a" style="left:944px;top:164px;width:14px;height:8px;background:#f3f3f3;border-left:1px solid #e0e0e0;border-bottom:1px solid #e0e0e0"></div>
<div class="a" style="left:944px;top:172px;width:14px;height:8px;background:#f3f3f3;border-left:1px solid #e0e0e0"></div>
<svg class="a" style="left:944px;top:162px" width="16" height="20"><path d="M3.5 7.0 L7.0 3.0 L10.5 7.0 Z M3.5 13.0 L7.0 17.0 L10.5 13.0 Z" fill="#b0b0b0"/></svg>
<div class="a" style="left:972px;top:72px;width:13px;height:13px;background:#0a5fc9;border-radius:3px"></div>
<svg class="a" style="left:972px;top:72px" width="13" height="13"><path d="M3.3 6.8 L5.6 9 L9.8 4.6" fill="none" stroke="#fff" stroke-width="1.1"/></svg>
<div class="a" style="left:972px;top:94px;width:13px;height:13px;background:#0a5fc9;border-radius:3px"></div>
<svg class="a" style="left:972px;top:94px" width="13" height="13"><path d="M3.3 6.8 L5.6 9 L9.8 4.6" fill="none" stroke="#fff" stroke-width="1.1"/></svg>
<div class="a" style="left:991.0px;top:73.81px;font-size:11.45px;line-height:11.45px;letter-spacing:-0.402px;">-135.0</div>
<div class="a" style="left:991.0px;top:95.81px;font-size:11.45px;line-height:11.45px;letter-spacing:-0.402px;">-331.7</div>
<div class="a" style="left:1033.5px;top:74.67px;font-size:11.02px;line-height:11.02px;letter-spacing:-0.456px;">Mass X</div>
<div class="a" style="left:1033.5px;top:96.67px;font-size:11.02px;line-height:11.02px;letter-spacing:-0.456px;">Mass Y</div>
<div class="a" style="left:1074px;top:69px;width:58px;height:20px;background:#fff;border:1px solid #a8a8a8"></div>
<div class="a" style="left:1076.0px;top:71.99px;font-size:12.42px;line-height:12.42px;letter-spacing:-0.426px;color:#000">0.0</div>
<div class="a" style="left:1116px;top:71px;width:14px;height:8px;background:#f3f3f3;border-left:1px solid #e0e0e0;border-bottom:1px solid #e0e0e0"></div>
<div class="a" style="left:1116px;top:79px;width:14px;height:8px;background:#f3f3f3;border-left:1px solid #e0e0e0"></div>
<svg class="a" style="left:1116px;top:69px" width="16" height="20"><path d="M3.5 7.0 L7.0 3.0 L10.5 7.0 Z M3.5 13.0 L7.0 17.0 L10.5 13.0 Z" fill="#000"/></svg>
<div class="a" style="left:1074px;top:91px;width:58px;height:20px;background:#fff;border:1px solid #a8a8a8"></div>
<div class="a" style="left:1076.0px;top:93.99px;font-size:12.42px;line-height:12.42px;letter-spacing:-0.426px;color:#000">0.0</div>
<div class="a" style="left:1116px;top:93px;width:14px;height:8px;background:#f3f3f3;border-left:1px solid #e0e0e0;border-bottom:1px solid #e0e0e0"></div>
<div class="a" style="left:1116px;top:101px;width:14px;height:8px;background:#f3f3f3;border-left:1px solid #e0e0e0"></div>
<svg class="a" style="left:1116px;top:91px" width="16" height="20"><path d="M3.5 7.0 L7.0 3.0 L10.5 7.0 Z M3.5 13.0 L7.0 17.0 L10.5 13.0 Z" fill="#000"/></svg>
<div class="a" style="left:972px;top:121px;width:13px;height:13px;border:1px solid #cfcfcf;border-radius:3px;background:#f7f7f7"></div>
<div class="a" style="left:972px;top:143px;width:13px;height:13px;border:1px solid #cfcfcf;border-radius:3px;background:#f7f7f7"></div>
<div class="a" style="left:972px;top:165px;width:13px;height:13px;border:1px solid #cfcfcf;border-radius:3px;background:#f7f7f7"></div>
<div class="a" style="left:991.0px;top:123.31px;font-size:11.45px;line-height:11.45px;letter-spacing:-0.394px;color:#a9a9a9">0.0</div>
<div class="a" style="left:991.0px;top:145.31px;font-size:11.45px;line-height:11.45px;letter-spacing:-0.394px;color:#a9a9a9">0.0</div>
<div class="a" style="left:991.0px;top:167.31px;font-size:11.45px;line-height:11.45px;letter-spacing:-0.394px;color:#a9a9a9">0.0</div>
<div class="a" style="left:1043.0px;top:118.04px;font-size:11.18px;line-height:11.18px;letter-spacing:-0.445px;color:#a0a0a0">Shape model</div>
<div class="a" style="left:1113px;top:118px;width:13px;height:13px;border:1px solid #cfcfcf;border-radius:3px;background:#f7f7f7"></div>
<div class="a" style="left:1029.0px;top:142.67px;font-size:11.61px;line-height:11.61px;letter-spacing:-0.387px;">a/b: 1.00, dMag: 0.00</div>
<div class="a" style="left:1033.5px;top:165.36px;font-size:11.39px;line-height:11.39px;letter-spacing:-0.394px;">Motion: 11.08 km/s</div>
<div class="a" style="left:970px;top:181px;width:18px;height:8px;background:#fff;border-radius:4px"></div>
<div class="a" style="left:972px;top:184px;width:14px;height:2px;background:#ee0000"></div>
<div class="a" style="left:806px;top:192px;width:13px;height:13px;background:#0a5fc9;border-radius:3px"></div>
<svg class="a" style="left:806px;top:192px" width="13" height="13"><path d="M3.3 6.8 L5.6 9 L9.8 4.6" fill="none" stroke="#fff" stroke-width="1.1"/></svg>
<div class="a" style="left:824.5px;top:193.17px;font-size:11.02px;line-height:11.02px;letter-spacing:-0.353px;">Circular</div>
<div class="a" style="left:876px;top:192px;width:13px;height:13px;background:#0a5fc9;border-radius:3px"></div>
<svg class="a" style="left:876px;top:192px" width="13" height="13"><path d="M3.3 6.8 L5.6 9 L9.8 4.6" fill="none" stroke="#fff" stroke-width="1.1"/></svg>
<div class="a" style="left:895.0px;top:186.72px;font-size:10.96px;line-height:10.96px;letter-spacing:-0.450px;">Use assumed</div>
<div class="a" style="left:895.0px;top:199.22px;font-size:10.96px;line-height:10.96px;letter-spacing:-0.394px;">diameter</div>
<div class="a" style="left:974px;top:192px;width:13px;height:13px;border:1px solid #333;border-radius:3px;background:#fdfdfd"></div>
<div class="a" style="left:993.0px;top:192.81px;font-size:11.45px;line-height:11.45px;letter-spacing:-0.393px;">Include Miss events</div>
<div class="a" style="left:804px;top:219px;width:322px;height:20px;border-top:2px solid #6e6e6e;border-left:2px solid #6e6e6e;border-bottom:1px solid #fff;border-right:1px solid #fff;background:#f0f0f0"></div>
<div class="a" style="left:812.0px;top:222.30px;font-size:12.64px;line-height:12.64px;letter-spacing:-0.470px;color:#a8a8a8;font-weight:bold">Double stars - show</div>
<svg class="a" style="left:936px;top:222px" width="200" height="16"><circle cx="8.5" cy="7.5" r="6" fill="#c8c8c8"/><circle cx="8.5" cy="7.5" r="2.6" fill="#fff"/><circle cx="60.5" cy="7.5" r="6" fill="#f6f6f6" stroke="#c8c8c8"/><circle cx="125.5" cy="7.5" r="6" fill="#f6f6f6" stroke="#c8c8c8"/></svg>
<div class="a" style="left:956.0px;top:225.00px;font-size:10.04px;line-height:10.04px;letter-spacing:-0.381px;color:#aaa">Both</div>
<div class="a" style="left:1008.0px;top:225.00px;font-size:10.04px;line-height:10.04px;letter-spacing:-0.364px;color:#aaa">Primary</div>
<div class="a" style="left:1073.0px;top:225.09px;font-size:9.94px;line-height:9.94px;letter-spacing:-0.393px;color:#aaa">Secondary</div>
<div class="a" style="left:805.0px;top:248.72px;font-size:12.74px;line-height:12.74px;letter-spacing:-0.397px;color:#006400;font-weight:bold">Quality of the fit</div>
<div class="a" style="left:905px;top:245px;width:214px;height:21px;background:#fff;border:1px solid #a5a5a5;border-radius:2px"></div>
<div class="a" style="left:907px;top:248px;width:192px;height:15px;background:#ffff00"></div>
<div class="a" style="left:908.5px;top:250.63px;font-size:11.07px;line-height:11.07px;letter-spacing:-0.343px;">No reliable position or size</div>
<svg class="a" style="left:1104px;top:250px" width="12" height="10"><path d="M1.5 3 L6 7.5 L10.5 3" fill="none" stroke="#333" stroke-width="1"/></svg>
<div class="a" style="left:905px;top:269px;width:125px;height:17px;background:#add8e6"></div>
<div class="a" style="left:905px;top:270px;width:13px;height:13px;background:#0a5fc9;border-radius:3px"></div>
<svg class="a" style="left:905px;top:270px" width="13" height="13"><path d="M3.3 6.8 L5.6 9 L9.8 4.6" fill="none" stroke="#fff" stroke-width="1.1"/></svg>
<div class="a" style="left:925.0px;top:272.49px;font-size:11.23px;line-height:11.23px;letter-spacing:-0.354px;font-style:italic">Flag for future review</div>
<div class="a" style="left:795px;top:290px;width:339px;height:81px;background:#f0ffff;border-top:2px solid #6a6a6a;border-left:2px solid #6a6a6a;border-right:1px solid #fff;border-bottom:1px solid #fff"></div>
<div class="a" style="left:607.8px;width:400px;text-align:center;top:305.49px;font-size:12.42px;line-height:12.42px;letter-spacing:-0.614px;color:#800000;font-weight:bold">P</div>
<div class="a" style="left:607.8px;width:400px;text-align:center;top:318.99px;font-size:12.42px;line-height:12.42px;letter-spacing:-0.562px;color:#800000;font-weight:bold">L</div>
<div class="a" style="left:607.9px;width:400px;text-align:center;top:332.49px;font-size:12.42px;line-height:12.42px;letter-spacing:-0.716px;color:#800000;font-weight:bold">O</div>
<div class="a" style="left:607.8px;width:400px;text-align:center;top:345.99px;font-size:12.42px;line-height:12.42px;letter-spacing:-0.562px;color:#800000;font-weight:bold">T</div>
<div class="a" style="left:823.0px;top:301.44px;font-size:13.07px;line-height:13.07px;letter-spacing:-0.507px;color:#800000;font-weight:bold">Scale</div>
<div class="a" style="left:862px;top:298px;width:269px;height:20px;background:#fff8d0"></div>
<div class="a" style="left:865px;top:302px;width:260px;height:5px;background:#e6e6e6;border:1px solid #d6d6d6;border-radius:2px"></div>
<svg class="a" style="left:0;top:0" width="1169" height="400"><g stroke="#999" stroke-width="1"><line x1="870.5" y1="313" x2="870.5" y2="317"/><line x1="883.1" y1="313" x2="883.1" y2="315.5"/><line x1="895.7" y1="313" x2="895.7" y2="315.5"/><line x1="908.3" y1="313" x2="908.3" y2="315.5"/><line x1="920.9" y1="313" x2="920.9" y2="315.5"/><line x1="933.5" y1="313" x2="933.5" y2="315.5"/><line x1="946.1" y1="313" x2="946.1" y2="315.5"/><line x1="958.7" y1="313" x2="958.7" y2="315.5"/><line x1="971.3" y1="313" x2="971.3" y2="315.5"/><line x1="983.9" y1="313" x2="983.9" y2="315.5"/><line x1="996.5" y1="313" x2="996.5" y2="315.5"/><line x1="1009.1" y1="313" x2="1009.1" y2="315.5"/><line x1="1021.7" y1="313" x2="1021.7" y2="315.5"/><line x1="1034.3" y1="313" x2="1034.3" y2="315.5"/><line x1="1046.9" y1="313" x2="1046.9" y2="315.5"/><line x1="1059.5" y1="313" x2="1059.5" y2="315.5"/><line x1="1072.1" y1="313" x2="1072.1" y2="315.5"/><line x1="1084.7" y1="313" x2="1084.7" y2="315.5"/><line x1="1097.3" y1="313" x2="1097.3" y2="315.5"/><line x1="1109.9" y1="313" x2="1109.9" y2="315.5"/><line x1="1122.5" y1="313" x2="1122.5" y2="317"/></g></svg>
<svg class="a" style="left:991px;top:300px" width="10" height="12"><path d="M1.5 1 H8.5 V7.5 L5 11 L1.5 7.5 Z" fill="#0a64d0"/></svg>
<div class="a" style="left:823.0px;top:326.94px;font-size:13.07px;line-height:13.07px;letter-spacing:-0.485px;color:#800000;font-weight:bold">Size</div>
<div class="a" style="left:853px;top:324px;width:163px;height:22px;background:#f0fff0;border-top:2px solid #6a6a6a;border-left:2px solid #6a6a6a;border-right:1px solid #ddd;border-bottom:1px solid #ddd"></div>
<svg class="a" style="left:860px;top:326px" width="130" height="18"><circle cx="9.5" cy="8.5" r="6.6" fill="#0a5fc9"/><circle cx="9.5" cy="8.5" r="2.6" fill="#fff"/><circle cx="73.5" cy="8.5" r="6" fill="#f5f5f5" stroke="#555" stroke-width="1"/><circle cx="117.5" cy="8.5" r="6" fill="#f5f5f5" stroke="#555" stroke-width="1"/></svg>
<div class="a" style="left:881.5px;top:328.63px;font-size:11.66px;line-height:11.66px;letter-spacing:-0.478px;color:#800000;font-weight:bold">normal</div>
<div class="a" style="left:945.5px;top:328.17px;font-size:12.2px;line-height:12.2px;letter-spacing:-0.417px;color:#800000;font-weight:bold">x 2</div>
<div class="a" style="left:989.5px;top:328.17px;font-size:12.2px;line-height:12.2px;letter-spacing:-0.417px;color:#800000;font-weight:bold">x 5</div>
<div class="a" style="left:1038.5px;top:328.17px;font-size:12.2px;line-height:12.2px;letter-spacing:-0.471px;color:#800080;font-weight:bold">Form opacity</div>
<div class="a" style="left:824.5px;top:352.53px;font-size:12.96px;line-height:12.96px;letter-spacing:-0.457px;color:#800000;font-weight:bold">Scroll range x1.25</div>
<div class="a" style="left:935px;top:353px;width:12px;height:12px;border:1px solid #333;border-radius:3px;background:#fdfdfd"></div>
<div class="a" style="left:1017px;top:346px;width:115px;height:21px;background:#fff8d0"></div>
<div class="a" style="left:1023px;top:352px;width:103px;height:4px;background:#e6e6e6;border:1px solid #d6d6d6;border-radius:2px"></div>
<svg class="a" style="left:0;top:0" width="1169" height="400"><g stroke="#999" stroke-width="1"><line x1="1027.5" y1="363" x2="1027.5" y2="366.5"/><line x1="1046.5" y1="363" x2="1046.5" y2="365"/><line x1="1065.5" y1="363" x2="1065.5" y2="365"/><line x1="1084.5" y1="363" x2="1084.5" y2="365"/><line x1="1103.5" y1="363" x2="1103.5" y2="365"/><line x1="1122.5" y1="363" x2="1122.5" y2="366.5"/></g></svg>
<svg class="a" style="left:1116px;top:347px" width="10" height="14"><path d="M1.5 1 H8.5 V9.5 L5 13 L1.5 9.5 Z" fill="#0a64d0"/></svg>
<div class="a" style="left:809.3px;top:383.61px;font-size:11.45px;line-height:11.45px;letter-spacing:-0.392px;">RMS fit 0.3 ±0.0 km</div>
<div class="a" style="left:801px;top:402px;width:328px;height:396px;background:#fff;border-top:2px solid #6d6d6d;border-left:2px solid #6d6d6d;border-right:1px solid #fff;border-bottom:1px solid #fff"></div>
<div class="a" style="left:803px;top:781px;width:324px;height:16px;background:#f0f0f0"></div>
<svg class="a" style="left:1112px;top:782px" width="14" height="14"><path d="M4 3 L10 7 L4 11 Z" fill="#7a7a7a"/></svg>
<svg class="a" style="left:0;top:0" width="1169" height="440"><circle cx="810" cy="411.8" r="1.3" fill="#000"/><circle cx="825" cy="411.8" r="1.3" fill="#000"/><circle cx="840.5" cy="411.8" r="1.3" fill="#000"/><circle cx="855.5" cy="411.8" r="1.3" fill="#000"/><circle cx="870.5" cy="411.8" r="1.3" fill="#000"/><line x1="808" y1="423" x2="874" y2="423" stroke="#f00" stroke-width="2"/></svg>
<div class="a" style="left:897.0px;top:405.50px;font-size:13.7px;line-height:13.7px;font-family:'Liberation Mono',monospace;white-space:pre">1(P) Predicted</div>
<div class="a" style="left:897.0px;top:418.00px;font-size:13.7px;line-height:13.7px;font-family:'Liberation Mono',monospace;white-space:pre">2    Hidehito Yamamura, near</div>


<div class="a" style="left:618px;top:661px;width:450px;height:133px;background:#b0c4de;border-top:2px solid #555;border-left:2px solid #555;border-right:2px solid #5a5a5a;border-bottom:2px solid #5a5a5a"></div>
<div class="a" style="left:620.8px;top:667.53px;font-size:12.96px;line-height:12.96px;letter-spacing:-0.608px;font-weight:bold;color:#283a5e">DAMIT</div>
<div class="a" style="left:664.5px;top:664.5px;width:15.0px;height:18.0px;background:#fff;border-radius:4px"></div>
<div class="a" style="left:667.0px;top:667.0px;width:10.0px;height:13.0px;background:#00ff00"></div>
<div class="a" style="left:472.3px;width:400px;text-align:center;top:667.37px;font-size:13.5px;line-height:13.5px;letter-spacing:-0.556px;font-weight:bold;color:#000">1</div>
<div class="a" style="left:682px;top:664.5px;width:15.5px;height:18.0px;background:#f4f4f4;border:2px solid #f9f9f9;border-radius:4px"></div>
<div class="a" style="left:490.0px;width:400px;text-align:center;top:667.99px;font-size:12.42px;line-height:12.42px;letter-spacing:-0.512px;color:#9c9c9c">2</div>
<div class="a" style="left:700px;top:664.5px;width:15.5px;height:18.0px;background:#f4f4f4;border:2px solid #f9f9f9;border-radius:4px"></div>
<div class="a" style="left:508.0px;width:400px;text-align:center;top:667.99px;font-size:12.42px;line-height:12.42px;letter-spacing:-0.512px;color:#9c9c9c">3</div>
<div class="a" style="left:718px;top:664.5px;width:15.5px;height:18.0px;background:#f4f4f4;border:2px solid #f9f9f9;border-radius:4px"></div>
<div class="a" style="left:526.0px;width:400px;text-align:center;top:667.99px;font-size:12.42px;line-height:12.42px;letter-spacing:-0.512px;color:#9c9c9c">4</div>
<div class="a" style="left:736px;top:664.5px;width:15.5px;height:18.0px;background:#f4f4f4;border:2px solid #f9f9f9;border-radius:4px"></div>
<div class="a" style="left:544.0px;width:400px;text-align:center;top:667.99px;font-size:12.42px;line-height:12.42px;letter-spacing:-0.512px;color:#9c9c9c">5</div>
<div class="a" style="left:754px;top:664.5px;width:15.5px;height:18.0px;background:#f4f4f4;border:2px solid #f9f9f9;border-radius:4px"></div>
<div class="a" style="left:562.0px;width:400px;text-align:center;top:667.99px;font-size:12.42px;line-height:12.42px;letter-spacing:-0.512px;color:#9c9c9c">6</div>
<div class="a" style="left:776px;top:664.5px;width:69.5px;height:18.5px;background:#fff;border-radius:4px"></div>
<div class="a" style="left:778.5px;top:667.0px;width:64.5px;height:13.5px;background:#b0e0e6"></div>
<div class="a" style="left:610.9px;width:400px;text-align:center;top:668.40px;font-size:11.34px;line-height:11.34px;letter-spacing:-0.377px;color:#000">Light curves</div>
<div class="a" style="left:852.5px;top:667.80px;font-size:12.64px;line-height:12.64px;letter-spacing:-0.588px;font-weight:bold;color:#283a5e">ISAM</div>
<div class="a" style="left:888.5px;top:664.5px;width:15.5px;height:18.0px;background:#f4f4f4;border:2px solid #f9f9f9;border-radius:4px"></div>
<div class="a" style="left:696.5px;width:400px;text-align:center;top:667.99px;font-size:12.42px;line-height:12.42px;letter-spacing:-0.512px;color:#9c9c9c">1</div>
<div class="a" style="left:912.5px;top:664.5px;width:15.5px;height:18.0px;background:#f4f4f4;border:2px solid #f9f9f9;border-radius:4px"></div>
<div class="a" style="left:720.5px;width:400px;text-align:center;top:667.99px;font-size:12.42px;line-height:12.42px;letter-spacing:-0.512px;color:#9c9c9c">2</div>
<div class="a" style="left:936.5px;top:664.5px;width:15.5px;height:18.0px;background:#f4f4f4;border:2px solid #f9f9f9;border-radius:4px"></div>
<div class="a" style="left:744.5px;width:400px;text-align:center;top:667.99px;font-size:12.42px;line-height:12.42px;letter-spacing:-0.512px;color:#9c9c9c">3</div>
<div class="a" style="left:960.5px;top:664.5px;width:15.5px;height:18.0px;background:#f4f4f4;border:2px solid #f9f9f9;border-radius:4px"></div>
<div class="a" style="left:768.5px;width:400px;text-align:center;top:667.99px;font-size:12.42px;line-height:12.42px;letter-spacing:-0.512px;color:#9c9c9c">4</div>
<div class="a" style="left:984.5px;top:664.5px;width:15.5px;height:18.0px;background:#f4f4f4;border:2px solid #f9f9f9;border-radius:4px"></div>
<div class="a" style="left:792.5px;width:400px;text-align:center;top:667.99px;font-size:12.42px;line-height:12.42px;letter-spacing:-0.512px;color:#9c9c9c">5</div>
<div class="a" style="left:1008.5px;top:664.5px;width:15.5px;height:18.0px;background:#f4f4f4;border:2px solid #f9f9f9;border-radius:4px"></div>
<div class="a" style="left:816.5px;width:400px;text-align:center;top:667.99px;font-size:12.42px;line-height:12.42px;letter-spacing:-0.512px;color:#9c9c9c">6</div>
<div class="a" style="left:1033px;top:664px;width:14px;height:18px;background:#fff;border-radius:3px"></div>
<div class="a" style="left:1035.5px;top:666.5px;width:9.0px;height:13.0px;background:#3636c8"></div>
<div class="a" style="left:840.3px;width:400px;text-align:center;top:667.07px;font-size:13.5px;line-height:13.5px;letter-spacing:-0.611px;font-weight:bold;color:#ffff00">?</div>
<div class="a" style="left:1049.5px;top:664px;width:14.0px;height:18px;background:#fff;border-radius:3px"></div>
<div class="a" style="left:1052.0px;top:666.5px;width:9.0px;height:13.0px;background:#dc143c"></div>
<div class="a" style="left:856.8px;width:400px;text-align:center;top:667.53px;font-size:12.96px;line-height:12.96px;letter-spacing:-0.640px;font-weight:bold;color:#fff">X</div>
<div class="a" style="left:626.3px;top:685.89px;font-size:11.12px;line-height:11.12px;letter-spacing:-0.433px;color:#2a3550">Source</div>
<div class="a" style="left:685.0px;top:685.70px;font-size:11.34px;line-height:11.34px;letter-spacing:-0.420px;color:#2a3550">ID</div>
<div class="a" style="left:719.3px;top:685.38px;font-size:11.72px;line-height:11.72px;letter-spacing:-0.387px;color:#2a3550">Surf/Vol</div>
<div class="a" style="left:623.5px;top:698.5px;width:38.5px;height:18.0px;background:#f0f0f0;border-top:1px solid #fff;border-left:1px solid #fff;border-right:1px solid #fff;border-bottom:1px solid #fff;box-shadow:inset -1px -1px 0 #cfd6e0"></div>
<div class="a" style="left:626.0px;top:701.44px;font-size:11.88px;line-height:11.88px;letter-spacing:-0.548px;">DAMIT</div>
<div class="a" style="left:664px;top:698.5px;width:54px;height:18.0px;background:#f0f0f0;border:1px solid #f7f7f7;border-bottom:2px solid #0a64d0"></div>
<div class="a" style="left:667px;top:701.5px;width:31px;height:13.0px;background:#0078d7"></div>
<div class="a" style="left:667.5px;top:701.29px;font-size:12.42px;line-height:12.42px;letter-spacing:-0.512px;color:#fff">14994</div>
<div class="a" style="left:697.5px;top:701.5px;width:1.5px;height:13.0px;background:#f08a3a"></div>
<div class="a" style="left:720px;top:698.5px;width:37.5px;height:18.0px;background:#f0f0f0;border-top:1px solid #fff;border-left:1px solid #fff;border-right:1px solid #fff;border-bottom:1px solid #fff;box-shadow:inset -1px -1px 0 #cfd6e0"></div>
<div class="a" style="left:722.5px;top:701.29px;font-size:12.42px;line-height:12.42px;letter-spacing:-0.460px;">1.051</div>
<div class="a" style="left:621.5px;top:718.5px;width:33.5px;height:20.5px;background:#ffff00;border:1px solid #2c2c2c"></div>
<div class="a" style="left:438.4px;width:400px;text-align:center;top:722.03px;font-size:12.96px;line-height:12.96px;letter-spacing:-0.498px;font-weight:bold">Dia</div>
<div class="a" style="left:658.9px;top:722.93px;font-size:11.07px;line-height:11.07px;letter-spacing:-0.408px;font-style:italic;color:#3a4868">Values in memory =&gt;</div>
<div class="a" style="left:759px;top:685px;width:303px;height:50px;background:#fff8d4;border-top:2px solid #6d6d6d;border-left:2px solid #6d6d6d;border-right:1px solid #fff;border-bottom:1px solid #fff"></div>
<div class="a" style="left:783.7px;top:686.50px;font-size:10.75px;line-height:10.75px;letter-spacing:-0.311px;color:#222">Fit quality</div>
<div class="a" style="left:861.7px;top:686.11px;font-size:11.45px;line-height:11.45px;letter-spacing:-0.418px;color:#222">Ph Corr</div>
<div class="a" style="left:912.4px;top:686.50px;font-size:10.75px;line-height:10.75px;letter-spacing:-0.412px;color:#222">Minimum dia</div>
<div class="a" style="left:988.4px;top:687.82px;font-size:10.85px;line-height:10.85px;letter-spacing:-0.432px;color:#222">Maximum dia</div>
<div class="a" style="left:762.5px;top:699px;width:96.0px;height:20.5px;background:#fff;border:1px solid #8d8d8d;border-radius:2px"></div>
<div class="a" style="left:765.5px;top:702.79px;font-size:11.23px;line-height:11.23px;letter-spacing:-0.388px;">Not constrained</div>
<svg class="a" style="left:844px;top:704px" width="12" height="10"><path d="M1.5 2.5 L6 7 L10.5 2.5" fill="none" stroke="#555" stroke-width="1"/></svg>
<div class="a" style="left:764.5px;top:721.49px;font-size:11.23px;line-height:11.23px;letter-spacing:-0.388px;color:#800080">Not constrained</div>
<div class="a" style="left:863.5px;top:699.5px;width:38.0px;height:18.0px;background:#efefef;border-bottom:1px solid #fff;border-right:1px solid #fff;box-shadow:inset 1px 1px 0 #e2e2e2"></div>
<div class="a" style="left:866.0px;top:703.94px;font-size:11.88px;line-height:11.88px;letter-spacing:-0.421px;">0°</div>
<div class="a" style="left:866.0px;top:720.94px;font-size:11.88px;line-height:11.88px;letter-spacing:-0.421px;color:#800080">0°</div>
<div class="a" style="left:910px;top:700px;width:36.5px;height:18.299999999999955px;background:#ffc0cb;border-bottom:1px solid #fff;border-right:1px solid #fff"></div>
<div class="a" style="left:912.5px;top:702.99px;font-size:12.42px;line-height:12.42px;letter-spacing:-0.512px;">15</div>
<div class="a" style="left:912.5px;top:720.49px;font-size:12.42px;line-height:12.42px;letter-spacing:-0.512px;color:#800080">15</div>
<div class="a" style="left:988.4px;top:700px;width:36.19999999999993px;height:18.299999999999955px;background:#ffc0cb;border-bottom:1px solid #fff;border-right:1px solid #fff"></div>
<div class="a" style="left:990.0px;top:721.86px;font-size:10.8px;line-height:10.8px;letter-spacing:-0.247px;color:#800080">- - - -</div>
<div class="a" style="left:949.6px;top:699.6px;width:29.399999999999977px;height:22.699999999999932px;background:#fff;border-radius:4px"></div>
<div class="a" style="left:952.1px;top:702.1px;width:24.399999999999977px;height:17.699999999999932px;background:#adff2f"></div>
<div class="a" style="left:764.5px;width:400px;text-align:center;top:703.99px;font-size:12.42px;line-height:12.42px;letter-spacing:-0.460px;color:#000">Set</div>
<div class="a" style="left:1027.4px;top:699.6px;width:29.299999999999955px;height:22.699999999999932px;background:#fff;border-radius:4px"></div>
<div class="a" style="left:1029.9px;top:702.1px;width:24.299999999999955px;height:17.699999999999932px;background:#adff2f"></div>
<div class="a" style="left:842.3px;width:400px;text-align:center;top:703.99px;font-size:12.42px;line-height:12.42px;letter-spacing:-0.460px;color:#000">Set</div>
<div class="a" style="left:626.4px;top:741.17px;font-size:11.02px;line-height:11.02px;letter-spacing:-0.361px;color:#2a3550">Version info</div>
<div class="a" style="left:686px;top:738.5px;width:269px;height:17.5px;background:#f0f0f0;border-bottom:2px solid #fff;border-right:1px solid #fff;box-shadow:inset 1px 1px 0 #dde3ea"></div>
<div class="a" style="left:689.0px;top:741.17px;font-size:12.2px;line-height:12.2px;letter-spacing:-0.455px;">2022-11-29, Q=1</div>
<div class="a" style="left:625.0px;top:765.99px;font-size:11.23px;line-height:11.23px;letter-spacing:-0.407px;color:#2a3550">Image scale</div>
<div class="a" style="left:686.5px;top:762.5px;width:269.5px;height:22.5px;background:#fff8d2"></div>
<svg class="a" style="left:0;top:0" width="1169" height="842"><g stroke="#9a9a9a" stroke-width="1"><line x1="697.0" y1="769" x2="697.0" y2="773"/><line x1="705.0" y1="769" x2="705.0" y2="771.5"/><line x1="713.1" y1="769" x2="713.1" y2="771.5"/><line x1="721.1" y1="769" x2="721.1" y2="771.5"/><line x1="729.2" y1="769" x2="729.2" y2="771.5"/><line x1="737.2" y1="769" x2="737.2" y2="771.5"/><line x1="745.3" y1="769" x2="745.3" y2="771.5"/><line x1="753.4" y1="769" x2="753.4" y2="771.5"/><line x1="761.4" y1="769" x2="761.4" y2="771.5"/><line x1="769.5" y1="769" x2="769.5" y2="771.5"/><line x1="777.5" y1="769" x2="777.5" y2="771.5"/><line x1="785.5" y1="769" x2="785.5" y2="771.5"/><line x1="793.6" y1="769" x2="793.6" y2="771.5"/><line x1="801.6" y1="769" x2="801.6" y2="771.5"/><line x1="809.7" y1="769" x2="809.7" y2="771.5"/><line x1="817.8" y1="769" x2="817.8" y2="771.5"/><line x1="825.8" y1="769" x2="825.8" y2="771.5"/><line x1="833.9" y1="769" x2="833.9" y2="771.5"/><line x1="841.9" y1="769" x2="841.9" y2="771.5"/><line x1="850.0" y1="769" x2="850.0" y2="771.5"/><line x1="858.0" y1="769" x2="858.0" y2="771.5"/><line x1="866.0" y1="769" x2="866.0" y2="771.5"/><line x1="874.1" y1="769" x2="874.1" y2="771.5"/><line x1="882.1" y1="769" x2="882.1" y2="771.5"/><line x1="890.2" y1="769" x2="890.2" y2="771.5"/><line x1="898.2" y1="769" x2="898.2" y2="771.5"/><line x1="906.3" y1="769" x2="906.3" y2="771.5"/><line x1="914.4" y1="769" x2="914.4" y2="771.5"/><line x1="922.4" y1="769" x2="922.4" y2="771.5"/><line x1="930.5" y1="769" x2="930.5" y2="771.5"/><line x1="938.5" y1="769" x2="938.5" y2="771.5"/><line x1="946.5" y1="769" x2="946.5" y2="773"/></g></svg>
<div class="a" style="left:693px;top:779px;width:257px;height:4px;background:#e6e6e6;border:1px solid #d4d4d4;border-radius:2px"></div>
<svg class="a" style="left:878px;top:773px" width="10" height="13"><path d="M1.5 12 H8.5 V4.5 L5 1 L1.5 4.5 Z" fill="#0a64d0"/></svg>
<div class="a" style="left:965.2px;top:741.1px;width:97.5px;height:46.60000000000002px;background:#fff;border-radius:4px"></div>
<div class="a" style="left:968px;top:744px;width:92px;height:41px;background:#ffc0cb"></div>
<div class="a" style="left:813.8px;width:400px;text-align:center;top:749.97px;font-size:13.39px;line-height:13.39px;letter-spacing:-0.530px;font-weight:bold;color:#9c0a30">Save/update</div>
<div class="a" style="left:813.3px;width:400px;text-align:center;top:763.53px;font-size:12.96px;line-height:12.96px;letter-spacing:-0.503px;font-weight:bold;color:#9c0a30">model&nbsp; 14994</div>

</body></html>
